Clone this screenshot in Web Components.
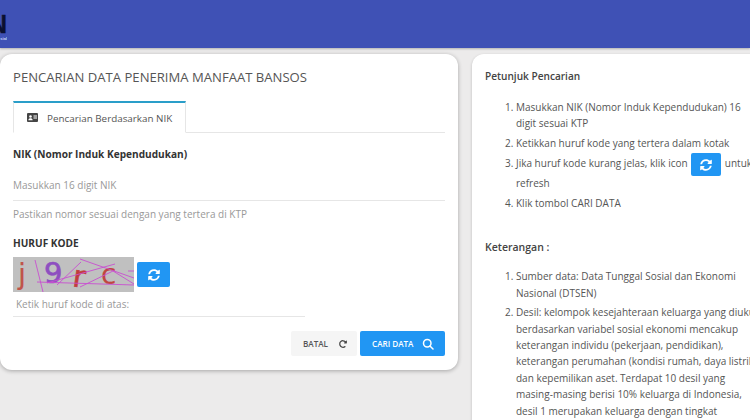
<!DOCTYPE html>
<html lang="id">
<head>
<meta charset="utf-8">
<title>Pencarian Data Penerima Manfaat Bansos</title>
<style>
  html, body { margin: 0; padding: 0; width: 750px; height: 420px; overflow: hidden; background: #ecebeb; }
  body { font-family: "Open Sans", "Noto Sans", sans-serif; color: #555; }
</style>
</head>
<body>
<app-shell>
  <app-header slot="header"></app-header>
  <search-card slot="left"></search-card>
  <info-card slot="right"></info-card>
</app-shell>

<script>
const SYNC_PATH = "M370.72 133.28C339.458 104.008 298.888 87.962 255.848 88c-77.458.068-144.328 53.178-162.791 126.85-1.344 5.363-6.122 9.15-11.651 9.15H24.103c-7.498 0-13.194-6.807-11.807-14.176C33.933 94.924 134.813 8 256 8c66.448 0 126.791 26.136 171.315 68.685L463.03 40.97C478.149 25.851 504 36.559 504 57.941V192c0 13.255-10.745 24-24 24H345.941c-21.382 0-32.09-25.851-16.971-40.971l41.75-41.749zM32 296h134.059c21.382 0 32.09 25.851 16.971 40.971l-41.75 41.75c31.262 29.273 71.835 45.319 114.876 45.28 77.418-.07 144.315-53.144 162.787-126.849 1.344-5.363 6.122-9.15 11.651-9.15h57.304c7.498 0 13.194 6.807 11.807 14.176C478.067 417.076 377.187 504 256 504c-66.448 0-126.791-26.136-171.315-68.685L48.97 471.03C33.851 486.149 8 475.441 8 454.059V320c0-13.255 10.745-24 24-24z";
const REDO_PATH = "M256.455 8c66.269.119 126.437 26.233 170.859 68.685l35.715-35.715C478.149 25.851 504 36.559 504 57.941V192c0 13.255-10.745 24-24 24H345.941c-21.382 0-32.09-25.851-16.971-40.971l41.75-41.75c-30.864-28.899-70.801-44.907-113.23-45.273-92.398-.798-170.283 73.977-169.484 169.442C88.764 348.009 162.184 424 256 424c41.127 0 79.997-14.678 110.629-41.556 4.743-4.161 11.906-3.908 16.368.553l39.662 39.662c4.872 4.872 4.631 12.815-.482 17.433C378.202 479.813 319.926 504 256 504 119.034 504 8.001 392.967 8 256.002 7.999 119.193 119.646 7.755 256.455 8z";

class AppShell extends HTMLElement {
  constructor() {
    super();
    this.attachShadow({ mode: "open" });
    this.shadowRoot.innerHTML = `
      <style>
        :host { display: block; width: 750px; height: 420px; overflow: hidden; }
        .main {
          display: grid;
          grid-template-columns: 458px 320px;
          column-gap: 14px;
          align-items: start;
          padding-top: 6px;
        }
      </style>
      <slot name="header"></slot>
      <div class="main">
        <slot name="left"></slot>
        <slot name="right"></slot>
      </div>
    `;
  }
}

class AppHeader extends HTMLElement {
  constructor() {
    super();
    this.attachShadow({ mode: "open" });
    this.shadowRoot.innerHTML = `
      <style>
        :host {
          display: block;
          height: 48px;
          background: #3f51b5;
          box-shadow: 0 1px 2px rgba(0,0,0,.25);
          overflow: hidden;
        }
        .logo { display: flex; flex-direction: column; align-items: flex-end; width: 7px; padding-top: 14px; overflow: hidden; }
        .mark {
          font: 700 25px/21px "Liberation Sans", sans-serif;
          color: #0b1030;
          -webkit-text-stroke: .4px #0b1030;
        }
        .sub { margin-top: 1px; font: 700 4px/5px "Liberation Sans", sans-serif; color: #c9d2f5; white-space: nowrap; }
      </style>
      <div class="logo"><span class="mark">N</span><span class="sub">sial</span></div>
    `;
  }
}

class RefreshButton extends HTMLElement {
  constructor() {
    super();
    this.attachShadow({ mode: "open" });
    this.shadowRoot.innerHTML = `
      <style>
        :host {
          display: inline-flex;
          align-items: center;
          justify-content: center;
          width: 33px;
          height: 25px;
          background: #2196f3;
          border-radius: 2px;
          vertical-align: middle;
        }
        svg { width: 12px; height: 12px; fill: #fff; display: block; }
      </style>
      <svg viewBox="0 0 512 512"><path d="${SYNC_PATH}"/></svg>
    `;
  }
}

class CaptchaImage extends HTMLElement {
  constructor() {
    super();
    this.attachShadow({ mode: "open" });
    this.shadowRoot.innerHTML = `
      <style>
        :host { display: block; width: 121px; height: 35px; background: #c0c0c0; }
        svg { display: block; width: 121px; height: 35px; }
        text { font-family: "DejaVu Sans", sans-serif; }
      </style>
      <svg viewBox="0 0 121 35">
        <text x="5" y="27" font-size="29" fill="#c0544a" stroke="#c0544a" stroke-width=".1">j</text>
        <text x="31" y="26" font-size="29" fill="#8e4fc0" stroke="#8e4fc0" stroke-width=".7">9</text>
        <text x="60" y="30" font-size="30" fill="#c23c3c" stroke="#c23c3c" stroke-width=".7" transform="rotate(8 66 20)">r</text>
        <text x="88" y="27" font-size="28" fill="#c0473f" stroke="#c0473f" stroke-width=".1">c</text>
        <g stroke="#c84fd0" stroke-width=".9" fill="none">
          <path d="M22 3 L30 35"/>
          <path d="M24 25 L121 28"/>
          <path d="M44 28 L68 5"/>
          <path d="M34 26 L102 7"/>
          <path d="M67 2 L121 21"/>
          <path d="M67 30 L100 14 L121 27"/>
          <path d="M115 14 L121 14"/>
        </g>
      </svg>
    `;
  }
}

class SearchTab extends HTMLElement {
  constructor() {
    super();
    this.attachShadow({ mode: "open" });
    this.shadowRoot.innerHTML = `
      <style>
        :host { display: block; border-bottom: 1px solid #e6e6e6; }
        .tab {
          box-sizing: border-box;
          display: flex;
          align-items: center;
          gap: 9px;
          width: 173px;
          height: 32px;
          margin-bottom: -1px;
          padding-left: 13px;
          background: #fff;
          border: 1px solid #e6e6e6;
          border-top: 2px solid #2a9ec9;
          border-bottom-color: #fff;
          font-size: 9.85px;
          color: #555;
          white-space: nowrap;
        }
        svg { width: 11px; height: 9px; display: block; }
      </style>
      <div class="tab">
        <svg viewBox="0 0 22 18">
          <rect width="22" height="18" rx="2" fill="#444"/>
          <circle cx="7" cy="7" r="2.6" fill="#fff"/>
          <path d="M2.8 14.5c0-3 2-4 4.2-4s4.200 1 4.200 4z" fill="#fff"/>
          <rect x="13" y="5" width="7" height="2" fill="#fff"/>
          <rect x="13" y="9" width="7" height="2" fill="#fff"/>
        </svg>
        <span><slot></slot></span>
      </div>
    `;
  }
}

class SearchCard extends HTMLElement {
  constructor() {
    super();
    this.attachShadow({ mode: "open" });
    this.shadowRoot.innerHTML = `
      <style>
        :host {
          display: block;
          box-sizing: border-box;
          height: 316px;
          padding: 15px 13px 0;
          background: #fff;
          border-radius: 12px;
          box-shadow: 0 1px 4px rgba(0,0,0,.3);
          color: #555;
        }
        h1 { margin: 0 0 15px; font-size: 13.1px; line-height: 17px; font-weight: 400; color: #555; white-space: nowrap; }
        .label { font-size: 10.100px; line-height: 14px; font-weight: 700; color: #333; }
        .nik { margin-top: 14px; }
        .field {
          height: 31px;
          margin-top: 9px;
          box-sizing: border-box;
          padding-top: 8px;
          font-size: 10px;
          line-height: 14px;
          color: #999;
          border-bottom: 1px solid #e6e6e6;
        }
        .hint { margin-top: 6px; font-size: 10px; line-height: 14px; color: #999; }
        .kode { margin-top: 15px; }
        .captcha { display: flex; align-items: center; gap: 3px; margin-top: 7px; }
        .type {
          box-sizing: border-box;
          width: 292px;
          height: 25px;
          padding: 5px 0 0 3px;
          font-size: 10px;
          line-height: 14px;
          color: #999;
          border-bottom: 1px solid #e6e6e6;
        }
        .actions { display: flex; justify-content: flex-end; gap: 3px; margin-top: 14px; }
        .btn {
          box-sizing: border-box;
          display: flex;
          align-items: center;
          height: 25px;
          font-size: 8.1px;
          font-weight: 600;
          border-radius: 2px;
          white-space: nowrap;
        }
        .batal { width: 66px; padding-left: 12px; gap: 11px; background: #f5f5f5; color: #555; }
        .cari { width: 85px; padding-left: 12px; gap: 9px; background: #2196f3; color: #fff; }
        .batal svg { width: 8px; height: 8px; fill: #444; }
        .cari svg { width: 12px; height: 12px; }
      </style>
      <h1>PENCARIAN DATA PENERIMA MANFAAT BANSOS</h1>
      <search-tab>Pencarian Berdasarkan NIK</search-tab>
      <div class="label nik">NIK (Nomor Induk Kependudukan)</div>
      <div class="field">Masukkan 16 digit NIK</div>
      <div class="hint">Pastikan nomor sesuai dengan yang tertera di KTP</div>
      <div class="label kode">HURUF KODE</div>
      <div class="captcha">
        <captcha-image></captcha-image>
        <refresh-button></refresh-button>
      </div>
      <div class="type">Ketik huruf kode di atas:</div>
      <div class="actions">
        <div class="btn batal">BATAL <svg viewBox="0 0 512 512"><path d="${REDO_PATH}"/></svg></div>
        <div class="btn cari">CARI DATA
          <svg viewBox="0 0 24 24" fill="none" stroke="#fff" stroke-width="3" stroke-linecap="round"><circle cx="10.500" cy="10.500" r="7.500"/><path d="M16 16l6 6"/></svg>
        </div>
      </div>
    `;
  }
}

class InfoCard extends HTMLElement {
  constructor() {
    super();
    this.attachShadow({ mode: "open" });
    this.shadowRoot.innerHTML = `
      <style>
        :host {
          display: block;
          box-sizing: border-box;
          height: 420px;
          padding: 14px 30px 0 13px;
          background: #fff;
          border-radius: 12px 12px 0 0;
          box-shadow: 0 1px 3px rgba(0,0,0,.2);
          font-size: 10px;
          color: #555;
        }
        h2 { margin: 0; font-size: 10.1px; line-height: 16px; font-weight: 600; color: #444; }
        ol { margin: 15px 0 0; padding-left: 31px; }
        li { line-height: 16.400px; margin-bottom: 3px; }
        .tall { line-height: 19.5px; margin-bottom: 1.5px; }
        refresh-button { margin: -2px 1px; height: 23px; width: 30px; }
        .ket { margin-top: 28px; font-size: 10.5px; }
        .ket + ol { margin-top: 13px; }
      </style>
      <h2>Petunjuk Pencarian</h2>
      <ol>
        <li>Masukkan NIK (Nomor Induk Kependudukan) 16 digit sesuai KTP</li>
        <li>Ketikkan huruf kode yang tertera dalam kotak</li>
        <li class="tall">Jika huruf kode kurang jelas, klik icon <refresh-button></refresh-button> untuk<br>refresh</li>
        <li>Klik tombol CARI DATA</li>
      </ol>
      <h2 class="ket">Keterangan :</h2>
      <ol>
        <li>Sumber data: Data Tunggal Sosial dan Ekonomi Nasional (DTSEN)</li>
        <li>Desil: kelompok kesejahteraan keluarga yang diukur berdasarkan variabel sosial ekonomi mencakup keterangan individu (pekerjaan, pendidikan), keterangan perumahan (kondisi rumah, daya listrik, dan kepemilikan aset. Terdapat 10 desil yang masing-masing berisi 10% keluarga di Indonesia, desil 1 merupakan keluarga dengan tingkat kesejahteraan terendah</li>
      </ol>
    `;
  }
}

customElements.define("app-shell", AppShell);
customElements.define("app-header", AppHeader);
customElements.define("refresh-button", RefreshButton);
customElements.define("captcha-image", CaptchaImage);
customElements.define("search-tab", SearchTab);
customElements.define("search-card", SearchCard);
customElements.define("info-card", InfoCard);
</script>
</body>
</html>
